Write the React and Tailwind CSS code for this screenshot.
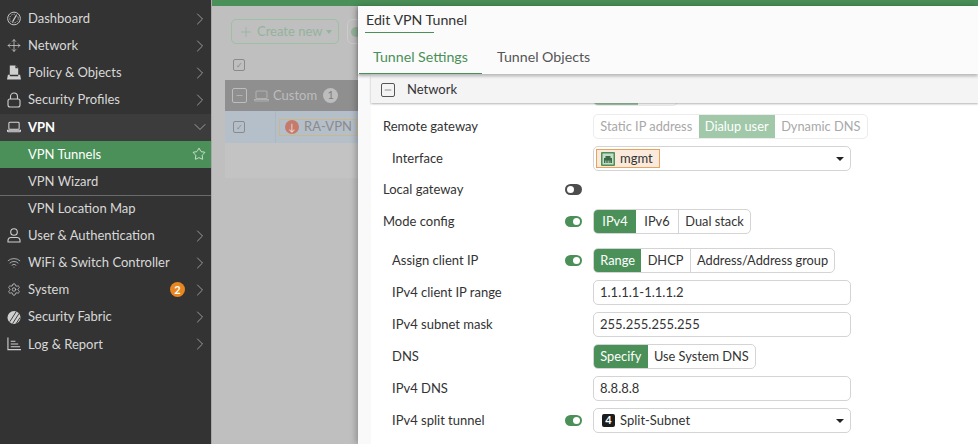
import * as React from "react";
import {
  ChevronDown,
  ChevronRight,
  Minus,
  Move,
  Plus,
  Settings,
  Star,
  Wifi,
} from "lucide-react";

function GaugeIcon() {
  return (
    <svg width="15" height="15" viewBox="0 0 15 15" fill="none" stroke="#cfcfcf" strokeWidth="1">
      <circle cx="7.5" cy="7.5" r="6.8" />
      <circle cx="7.5" cy="7.5" r="4.6" strokeDasharray="1.2 1.4" />
      <path d="M6 11 10 4" strokeWidth="1.4" />
    </svg>
  );
}

function PolicyIcon() {
  return (
    <svg width="15" height="16" viewBox="0 0 15 16" fill="#d0d0d0">
      <path d="M3 0h6l3 3v7H3z" />
      <path d="M9 0v3h3" fill="#333" />
      <path d="M1 10h2v1.5h9V10h2l1 5H0z" />
    </svg>
  );
}

function LockIcon() {
  return (
    <svg width="14" height="16" viewBox="0 0 14 16" fill="none" stroke="#cfcfcf" strokeWidth="1.1">
      <rect x="1" y="7" width="12" height="8" rx="2" />
      <path d="M3.5 7V4.5a3.5 3.5 0 0 1 7 0V7" />
    </svg>
  );
}

function LaptopIcon({ color = "#d8d8d8" }) {
  return (
    <svg width="15" height="12" viewBox="0 0 15 12" fill="none" stroke={color} strokeWidth="1.1">
      <rect x="2" y="1" width="11" height="7.5" rx="1" />
      <path d="M.5 9.5h14v.5a1 1 0 0 1-1 1h-12a1 1 0 0 1-1-1z" />
    </svg>
  );
}

function UserIcon() {
  return (
    <svg width="14" height="15" viewBox="0 0 14 15" fill="none" stroke="#cfcfcf" strokeWidth="1.1">
      <circle cx="7" cy="4" r="3.3" />
      <path d="M1 14v-2a3 3 0 0 1 3-2.5h6a3 3 0 0 1 3 2.5v2z" />
    </svg>
  );
}

function FabricIcon() {
  return (
    <svg width="15" height="15" viewBox="0 0 15 15">
      <circle cx="7.5" cy="7.5" r="7" fill="#cfcfcf" />
      <path d="M3 12 10 1M6 14l7-11M9.5 14.5l4.5-7" stroke="#333" strokeWidth="1" />
    </svg>
  );
}

function LogIcon() {
  return (
    <svg width="15" height="14" viewBox="0 0 15 14" fill="none" stroke="#cfcfcf" strokeWidth="1.2">
      <path d="M1 0v13h14M4 4h5M4 7h8M4 10h10" />
    </svg>
  );
}

function MenuItem({ icon, label, badge }) {
  return (
    <div className="flex h-[27.2px] items-center pl-[7px] pr-[1px] text-[#d8d8d8]">
      <span className="flex w-[14px] justify-center">{icon}</span>
      <span className="ml-[7px] flex-1">{label}</span>
      {badge && (
        <span className="mr-[5px] flex h-[15px] w-[15px] items-center justify-center rounded-full bg-[#e8861f] text-[11px] font-bold text-white">
          {badge}
        </span>
      )}
      <ChevronRight size={20} strokeWidth={0.9} className="text-[#bdbdbd]" />
    </div>
  );
}

function Sidebar() {
  const ic = { size: 15, strokeWidth: 1.2 };
  return (
    <aside className="flex h-full w-[211px] shrink-0 flex-col bg-[#333333] pt-[5px] text-[13px]">
      <MenuItem icon={<GaugeIcon />} label="Dashboard" />
      <MenuItem icon={<Move {...ic} />} label="Network" />
      <MenuItem icon={<PolicyIcon />} label="Policy & Objects" />
      <MenuItem icon={<LockIcon />} label="Security Profiles" />
      <div className="flex h-[27.2px] items-center bg-[#3c3c3c] pl-[7px] pr-[1px] font-bold text-white">
        <span className="flex w-[14px] justify-center">
          <LaptopIcon />
        </span>
        <span className="ml-[7px] flex-1">VPN</span>
        <ChevronDown size={20} strokeWidth={0.9} className="text-[#bdbdbd]" />
      </div>
      <div className="flex h-[27px] items-center bg-[#4a9058] pl-[28px] pr-[5px] text-white">
        <span className="flex-1">VPN Tunnels</span>
        <Star size={14} strokeWidth={1.2} />
      </div>
      <div className="flex h-[27px] items-center pl-[28px] text-[#d8d8d8]">VPN Wizard</div>
      <div className="flex h-[27px] items-center border-t border-[#6a6a6a] pl-[28px] text-[#d8d8d8]">
        VPN Location Map
      </div>
      <MenuItem icon={<UserIcon />} label="User & Authentication" />
      <MenuItem icon={<Wifi {...ic} />} label="WiFi & Switch Controller" />
      <MenuItem icon={<Settings {...ic} />} label="System" badge="2" />
      <MenuItem icon={<FabricIcon />} label="Security Fabric" />
      <MenuItem icon={<LogIcon />} label="Log & Report" />
    </aside>
  );
}

function Backdrop() {
  return (
    <div className="h-full bg-[#bfbfbf] text-[13px]">
      <div className="h-[6px] bg-[#4a9058]" />
      <div className="flex gap-[8px] pl-[19px] pt-[13px]">
        <div className="flex h-[25px] w-[108px] items-center rounded-[5px] border border-[#9dc0a4] pl-[6px] text-[#94b39b]">
          <Plus size={16} strokeWidth={1.1} />
          <span className="ml-[3px]">Create new</span>
          <span className="ml-[4px] border-x-[3px] border-t-[4px] border-x-transparent border-t-[#94b39b]" />
        </div>
        <div className="flex h-[25px] flex-1 items-center rounded-[5px] border border-[#cccccc] pl-[3px]">
          <span className="h-[10px] w-[10px] rounded-full bg-[#94b39b]" />
        </div>
      </div>
      <div className="ml-[21px] mt-[15px] flex h-[12px] w-[12px] items-center justify-center rounded-[2px] border border-[#8a8a8a] text-[8px] text-[#8a8a8a]">
        ✓
      </div>
      <div className="ml-[13px] mt-[9px] flex h-[31px] items-center bg-[#8f8f8f] pl-[7px] text-[#bdbdbd]">
        <span className="flex h-[15px] w-[15px] items-center justify-center rounded-[2px] border border-[#bdbdbd]">
          <Minus size={9} />
        </span>
        <span className="ml-[7px]">
          <LaptopIcon color="#b0b0b0" />
        </span>
        <span className="ml-[4px]">Custom</span>
        <span className="ml-[6px] flex h-[15px] w-[15px] items-center justify-center rounded-full bg-[#bdbdbd] text-[11px] text-[#7f7f7f]">
          1
        </span>
      </div>
      <div className="ml-[13px] flex h-[32px] items-center bg-[#b5bfca] pl-[8px]">
        <div className="flex h-[12px] w-[12px] items-center justify-center rounded-[2px] border border-[#8a8a8a] text-[8px] text-[#8a8a8a]">
          ✓
        </div>
        <div className="ml-[30px] flex h-full items-center border-l border-[#adb7c1] pl-[3px]">
          <div className="flex h-[17px] items-center border border-[#c9b98a] pl-[5px] pr-[4px] text-[#8b8b8b]">
            <span className="flex h-[14px] w-[14px] items-center justify-center rounded-full bg-[#c57b6c] text-[10px] text-[#f3dcd6]">
              ↓
            </span>
            <span className="ml-[5px]">RA-VPN</span>
          </div>
        </div>
      </div>
      <div className="ml-[13px] h-[35px] bg-[#c3c3c3]" />
    </div>
  );
}

function Segment({ items, active, dim }) {
  return (
    <div
      className={`flex h-[25px] w-fit overflow-hidden rounded-[5px] border text-[12.8px] ${
        dim ? "border-[#ececec] text-[#a8a8a8]" : "border-[#d4d4d4] text-[#333]"
      }`}
    >
      {items.map((item, i) => (
        <div
          key={item}
          className={`flex min-w-[42px] items-center justify-center px-[6.3px] ${
            i === active ? (dim ? "bg-[#a1c8a9] text-white" : "bg-[#4a9058] text-white") : ""
          } ${!dim && i > 0 && i !== active && i !== active + 1 ? "border-l border-[#d4d4d4]" : ""}`}
        >
          {item}
        </div>
      ))}
    </div>
  );
}

function Toggle({ on }) {
  return (
    <span
      className={`flex h-[11px] w-[17px] items-center rounded-full px-[2px] ${
        on ? "justify-end bg-[#4a9058]" : "justify-start bg-[#4d4d4d]"
      }`}
    >
      <span className="h-[7px] w-[7px] rounded-full bg-white" />
    </span>
  );
}

function Caret() {
  return <span className="border-x-[4px] border-t-[4px] border-x-transparent border-t-[#222]" />;
}

function Field({ children, caret }) {
  return (
    <div className="flex h-[25px] w-[258px] items-center justify-between rounded-[5px] border border-[#d4d4d4] pl-[6px] pr-[6px] text-[#333]">
      <div className="flex items-center">{children}</div>
      {caret && <Caret />}
    </div>
  );
}

function Row({ label, indent, toggle, children, className = "" }) {
  return (
    <div className={`mb-[7px] flex h-[25px] items-center ${className}`}>
      <div className={`w-[182px] shrink-0 ${indent ? "pl-[9px]" : ""}`}>{label}</div>
      <div className="flex w-[28px] shrink-0">{toggle !== undefined && <Toggle on={toggle} />}</div>
      {children}
    </div>
  );
}

function PortIcon() {
  return (
    <svg width="14" height="14" viewBox="0 0 14 14">
      <rect width="14" height="14" rx="1" fill="#4a9058" />
      <path d="M1.5 1.5h11v11h-11z" fill="#c6dccb" />
      <path d="M3 11V6h1.5V4h5v2H11v5z" fill="#3b6b45" />
      <path d="M4.5 11V8.5M6 11V8.5M7.5 11V8.5M9 11V8.5" stroke="#c6dccb" strokeWidth=".6" />
    </svg>
  );
}

function SlideOver() {
  return (
    <div className="absolute bottom-0 left-[146px] right-0 top-[6px] flex flex-col rounded-tl-[3px] bg-[#f9f9f9] text-[13px] text-[#333] shadow-[-2px_0_6px_rgba(0,0,0,0.25)]">
      <div className="relative z-10 h-[68px] shrink-0 bg-[#fbfbfb] shadow-[0_2px_3px_rgba(0,0,0,0.3)]">
        <div className="w-fit pl-[8px] pt-[3px] text-[14.2px] leading-[21px]">Edit VPN Tunnel</div>
        <div className="ml-[7px] mt-[2px] h-[1px] w-[69px] bg-[#4a9058]" />
        <div className="mt-[14px] flex text-[14.2px] leading-[20px]">
          <div className="relative w-[124px] pl-[15px] text-[#4a9058]">Tunnel Settings</div>
          <div className="pl-[15px] text-[#555]">Tunnel Objects</div>
        </div>
        <div className="absolute bottom-0 left-[1px] h-[1.5px] w-[123px] bg-[#4a9058]" />
      </div>
      <div className="ml-[13px] flex min-h-0 flex-1 flex-col bg-white">
        <div className="relative z-[5] mt-[2px] flex h-[27px] shrink-0 items-center bg-[#f4f4f4] pl-[10px] shadow-[0_1px_2px_rgba(0,0,0,0.3)]">
          <span className="flex h-[14px] w-[14px] items-center justify-center rounded-[2px] border border-[#555]">
            <Minus size={10} strokeWidth={1.2} />
          </span>
          <span className="ml-[12px]">Network</span>
        </div>
        <div className="min-h-0 flex-1 overflow-hidden pl-[12px]">
          <Row className="-mt-[22px] !mb-[8px]">
            <div className="flex h-[25px] w-[85px] overflow-hidden rounded-[5px] border border-[#ececec]">
              <div className="w-[44px] bg-[#a1c8a9]" />
            </div>
          </Row>
          <Row label="Remote gateway">
            <Segment dim items={["Static IP address", "Dialup user", "Dynamic DNS"]} active={1} />
          </Row>
          <Row label="Interface" indent className="!mb-[6px]">
            <div className="flex h-[25px] w-[258px] items-center justify-between rounded-[5px] border border-[#d4d4d4] pl-[2px] pr-[6px]">
              <span className="flex h-[19px] items-center border border-[#e8a25c] bg-[#fbeadb] pl-[4px] pr-[6px]">
                <PortIcon />
                <span className="ml-[5px]">mgmt</span>
              </span>
              <Caret />
            </div>
          </Row>
          <Row label="Local gateway" toggle={false} />
          <Row label="Mode config" toggle={true} className="!mb-[14px]">
            <Segment items={["IPv4", "IPv6", "Dual stack"]} active={0} />
          </Row>
          <Row label="Assign client IP" indent toggle={true}>
            <Segment items={["Range", "DHCP", "Address/Address group"]} active={0} />
          </Row>
          <Row label="IPv4 client IP range" indent>
            <Field>1.1.1.1-1.1.1.2</Field>
          </Row>
          <Row label="IPv4 subnet mask" indent>
            <Field>255.255.255.255</Field>
          </Row>
          <Row label="DNS" indent>
            <Segment items={["Specify", "Use System DNS"]} active={0} />
          </Row>
          <Row label="IPv4 DNS" indent>
            <Field>8.8.8.8</Field>
          </Row>
          <Row label="IPv4 split tunnel" indent toggle={true}>
            <Field caret>
              <span className="ml-[2px] mr-[5px] flex h-[13px] w-[13px] items-center justify-center rounded-[2px] bg-[#1c1c1c] text-[11px] font-bold text-white">
                4
              </span>
              Split-Subnet
            </Field>
          </Row>
        </div>
      </div>
    </div>
  );
}

export default function App() {
  return (
    <div className="flex h-[444px] w-[978px] overflow-hidden font-['Lato',sans-serif]">
      <Sidebar />
      <div className="w-[1px] bg-[#a8a8a8]" />
      <main className="relative flex-1 overflow-hidden">
        <Backdrop />
        <SlideOver />
      </main>
    </div>
  );
}
